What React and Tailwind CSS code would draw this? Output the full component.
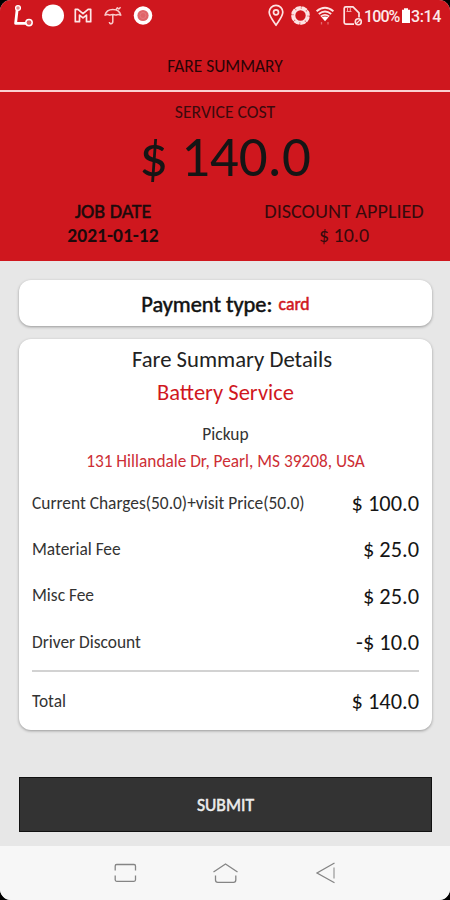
import React from 'react';

const charges = [
  ['Current Charges(50.0)+visit Price(50.0)', '$ 100.0'],
  ['Material Fee', '$ 25.0'],
  ['Misc Fee', '$ 25.0'],
  ['Driver Discount', '-$ 10.0'],
];

function NotificationIcons() {
  return (
    <svg width="160" height="32" viewBox="0 0 160 32" fill="none" stroke="#fff">
      {/* route */}
      <path d="M17.2 9 L15.6 23.3 L27 23.3" strokeWidth="2.8" strokeLinejoin="round" />
      <circle cx="18" cy="8" r="2.4" fill="#e88a8d" strokeWidth="1.3" />
      <circle cx="29" cy="22.6" r="3.2" fill="#e0555a" strokeWidth="1.5" />
      {/* dot */}
      <circle cx="53" cy="15.5" r="11" fill="#fff" stroke="none" />
      {/* mail */}
      <path
        d="M75.3 9.3 h2.6 l5.1 4.3 5.1-4.3 h2.6 v12.4 h-4.2 v-6.6 l-3.5 2.8 -3.5-2.8 v6.6 h-4.2 z"
        stroke="#fde6e6"
        strokeWidth="1.7"
        strokeLinejoin="round"
      />
      {/* umbrella */}
      <path
        d="M105 15.2 c1-4 4-5.7 7.8-5.7 s7 1.8 8 5.7 c-2-1.2-3.4-1-4.8 0 c-2-1-4.2-1-6.2 0 c-1.5-1-3-1.2-4.8 0 z M112.8 15 v6.6 c0 2.8-3.4 2.8-3.4 .4 M116 9.8 l1.4-2 1.4 1.2 1.8-1.8"
        stroke="#f9caca"
        strokeWidth="1.5"
        strokeLinejoin="round"
      />
      {/* record */}
      <circle cx="143" cy="15.5" r="9.3" fill="#fff" stroke="none" />
      <circle cx="143" cy="15.5" r="5.6" fill="#e0666a" stroke="none" />
      <circle cx="143" cy="15.5" r="3" stroke="#e57b7f" strokeWidth="1" />
    </svg>
  );
}

function SystemIcons() {
  return (
    <svg width="98" height="32" viewBox="265 0 98 32" fill="none" stroke="#fde3e3">
      {/* location pin */}
      <path
        d="M276 25.3 c-1.2-3-6.8-8-6.8-13.2 a6.8 6.8 0 0 1 13.6 0 c0 5.2-5.6 10.2-6.8 13.2 z"
        strokeWidth="1.7"
        strokeLinejoin="round"
      />
      <circle cx="276" cy="12.3" r="2.5" strokeWidth="1.7" />
      {/* sync ring */}
      <circle cx="300.5" cy="15.5" r="7.3" strokeWidth="4.2" />
      <circle cx="300.5" cy="15.5" r="7.5" stroke="#e2767a" strokeWidth="1.4" strokeDasharray="1.2 4.69" />
      <circle cx="300.5" cy="15.5" r="9.3" stroke="#d0171e" strokeWidth="1" strokeDasharray="1.5 5.8" />
      {/* wifi */}
      <g strokeWidth="1.9">
        <path d="M316.6 11.3 q8.4-7 16.8 0" />
        <path d="M318.8 13.9 q6.2-4.8 12.4 0" />
        <path d="M320.8 16.5 q4.2-3.2 8.4 0" />
      </g>
      <path d="M321.5 17.3 q3.5-1.8 7 0 l-3.500 4 z" fill="#fff" stroke="none" />
      <path d="M321.5 22 v2.5 M328 22 v2.5" stroke="#e4696d" strokeWidth="1.3" />
      {/* sim card */}
      <path
        d="M354 24.2 h-8.2 q-1.6 0-1.6-1.6 v-14.2 q0-1.6 1.6-1.6 h7.2 l6 6 v4.7"
        strokeWidth="1.7"
        strokeLinejoin="round"
      />
      <path d="M347.5 7.5 v3.5 M350.3 7.5 v3.5 M346.5 11.5 h5" strokeWidth="1" stroke="#f1a5a7" />
      <circle cx="358.3" cy="21.7" r="3" strokeWidth="1.6" />
      <path d="M356.3 23.7 l4-4" strokeWidth="1.2" />
    </svg>
  );
}

function StatusBar() {
  return (
    <div className="flex h-8 items-center">
      <NotificationIcons />
      <div className="ml-[105px] flex items-center font-['Roboto','Liberation_Sans',sans-serif] text-[16px] font-medium leading-8 text-[#fdeaea]">
        <SystemIcons />
        <span className="w-[38px] whitespace-nowrap pl-px pt-px tracking-[-0.9px]">100%</span>
        <svg width="10" height="32" viewBox="0 0 10 32" fill="#fff">
          <path d="M3 8.3 h4 v1.5 h2 v13.2 h-8 v-13.2 h2 z" />
        </svg>
        <span className="whitespace-nowrap pt-px tracking-[-0.4px]">3:14</span>
      </div>
    </div>
  );
}

function NavBar() {
  return (
    <nav className="flex h-[54px] justify-center bg-[#f7f7f7]">
      <svg width="450" height="54" viewBox="0 846 450 54" fill="none" stroke="#858585" strokeWidth="1.3">
        <path d="M115.2 870.5 v-4.5 q0-1.5 1.5-1.5 h17.3 q1.5 0 1.5 1.5 v4.5 M115.2 875.5 v4.3 q0 1.5 1.5 1.5 h17.3 q1.5 0 1.5-1.5 v-4.3" />
        <path d="M213.5 872 l12-8 12 8 M215.5 875.5 v4.5 q0 2.3 2.3 2.3 h15.7 q2.3 0 2.3-2.3 v-4.5" />
        <path d="M334.5 863 l-17.5 10 17.5 9.8" />
        <path d="M334 867.5 v11" stroke="#a0a0a0" />
      </svg>
    </nav>
  );
}

export default function App() {
  return (
    <div className="h-[900px] w-[450px] overflow-hidden bg-black font-['Carlito','Lato',sans-serif]">
      <div className="flex h-full flex-col overflow-hidden rounded-[11px] bg-[#e7e7e7]">
        <header className="bg-[#cf171e] text-[#1c0a0b]">
          <StatusBar />
          <h1 className="mt-[18px] h-8 text-center text-[17.4px] leading-8 text-[#2b0406]">FARE SUMMARY</h1>
          <div className="mt-2 h-0.5 bg-[#fbd0d0]" />
          <div className="h-[169px] pt-2.5">
            <p className="text-center text-[17.7px] leading-5 text-[#3c0a0d]">SERVICE COST</p>
            <p className="mt-[5px] text-center text-[57px] leading-[60px] text-[#151515]">$ 140.0</p>
            <div className="mt-3 flex text-center text-[20px] leading-6">
              <div className="w-[226px]">
                <p className="[-webkit-text-stroke:0.5px]">JOB DATE</p>
                <p className="text-[19.6px] font-bold">2021-01-12</p>
              </div>
              <div className="flex-1 pl-3 text-[#370a0c]">
                <p className="text-[20.2px]">DISCOUNT APPLIED</p>
                <p>$ 10.0</p>
              </div>
            </div>
          </div>
        </header>

        <main className="flex-1 pl-[19px] pr-[18px] pt-[19px]">
          <section className="flex h-[46px] items-center justify-center gap-1.5 rounded-xl bg-white shadow-[0_1px_3px_rgba(0,0,0,0.35)]">
            <span className="pt-[5px] text-[22.4px] leading-none text-[#111] [-webkit-text-stroke:0.5px]">Payment type:</span>
            <span className="pt-[3px] text-[17.8px] leading-none text-[#d0171e] [-webkit-text-stroke:0.5px]">card</span>
          </section>

          <section className="mt-[13px] h-[391px] rounded-xl bg-white px-[13px] pt-1 text-[17.4px] text-[#333] shadow-[0_1px_3px_rgba(0,0,0,0.35)]">
            <h2 className="pl-[13px] text-center text-[22.7px] leading-8 text-[#222]">Fare Summary Details</h2>
            <p className="mt-0.5 text-center text-[22.5px] leading-8 text-[#d0171e]">Battery Service</p>
            <p className="mt-[11px] text-center leading-7">Pickup</p>
            <p className="text-center text-[17.3px] leading-7 text-[#cd2e35]">
              131 Hillandale Dr, Pearl, MS 39208, USA
            </p>
            <dl className="mt-1">
              {charges.map(([label, amount]) => (
                <div key={label} className="flex h-[46.2px] items-center justify-between">
                  <dt>{label}</dt>
                  <dd className="pt-0.5 text-[22.4px] text-[#151515]">{amount}</dd>
                </div>
              ))}
            </dl>
            <hr className="mt-[5px] border-t-2 border-[#d2d2d2]" />
            <div className="mt-1.5 flex h-[46px] items-center justify-between">
              <span>Total</span>
              <span className="pt-0.5 text-[22.4px] text-[#151515]">$ 140.0</span>
            </div>
          </section>

          <button className="mt-[47px] block h-[55px] w-full border border-[#111] bg-[#333] pt-0.5 text-[17.6px] text-[#ececec] [-webkit-text-stroke:0.5px]">
            SUBMIT
          </button>
        </main>

        <NavBar />
      </div>
    </div>
  );
}
